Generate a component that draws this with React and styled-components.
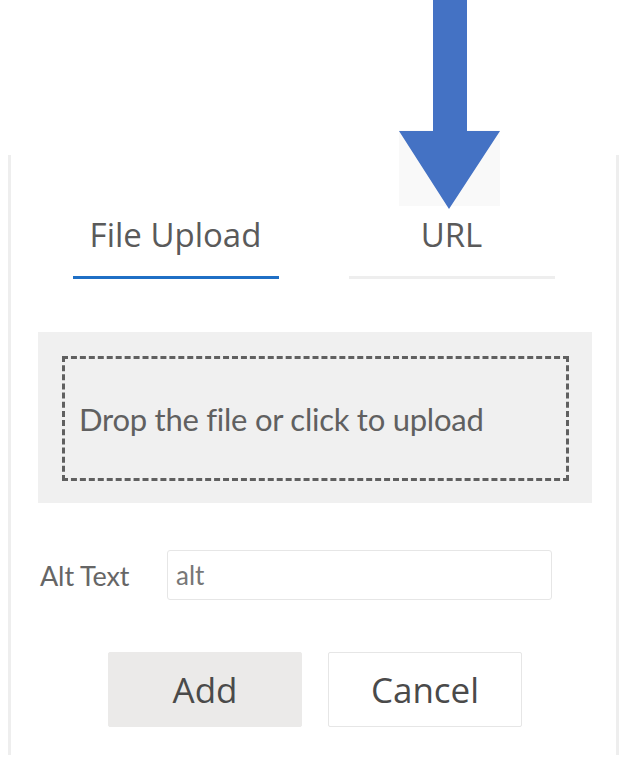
import React, { useState } from "react";
import styled, { createGlobalStyle } from "styled-components";

const Global = createGlobalStyle`
  html, body { margin: 0; padding: 0; background: #ffffff; }
  body { font-family: "Open Sans", "Noto Sans", sans-serif; }
  * { box-sizing: border-box; }
`;

const Page = styled.div`
  position: relative;
  width: 637px;
  height: 768px;
  padding-top: 155px;
  padding-left: 8px;
`;

const Panel = styled.div`
  width: 611px;
  height: 600px;
  border-left: 3px solid #eeeeee;
  border-right: 3px solid #eeeeee;
  padding: 60px 24px 28px 27px;
  display: flex;
  flex-direction: column;
`;

const Tabs = styled.div`
  display: flex;
  justify-content: center;
  gap: 70px;
  margin-left: -3px;
`;

const Tab = styled.button`
  width: 206px;
  height: 64px;
  padding: 0 0 21px;
  background: none;
  border: none;
  border-bottom: 3px solid ${(p) => (p.$active ? "#1f6fc5" : "#eeeeee")};
  font-family: "Open Sans", "Noto Sans", sans-serif;
  font-size: 33px;
  line-height: 40px;
  color: #5a5a5a;
  cursor: pointer;
`;

const DropZone = styled.div`
  margin-top: 53px;
  height: 171px;
  background: #f0f0f0;
  padding: 24px 23px 22px 24px;
  display: flex;
`;

const Dashed = styled.div`
  flex: 1;
  border: 3px dashed #606060;
  display: flex;
  align-items: center;
  padding-left: 14px;
  font-family: "Lato", "Open Sans", sans-serif;
  font-size: 31px;
  font-weight: 400;
  color: #606060;
  letter-spacing: -0.25px;
`;

const Row = styled.div`
  margin-top: 47px;
  display: flex;
  align-items: center;
`;

const Label = styled.label`
  width: 129px;
  padding-left: 2px;
  font-family: "Lato", "Open Sans", sans-serif;
  font-size: 27px;
  color: #666666;
  letter-spacing: -0.1px;
`;

const Input = styled.input`
  width: 385px;
  height: 50px;
  border: 1px solid #e6e6e6;
  border-radius: 3px;
  padding: 0 8px;
  font-family: "Lato", "Open Sans", sans-serif;
  font-size: 26px;
  color: #777777;
  outline: none;
`;

const Buttons = styled.div`
  margin-top: 52px;
  display: flex;
  justify-content: center;
  gap: 26px;
`;

const Button = styled.button`
  width: 194px;
  height: 75px;
  border: 1px solid ${(p) => (p.$primary ? "#ebeae9" : "#e6e6e6")};
  border-radius: 2px;
  background: ${(p) => (p.$primary ? "#ebeae9" : "#ffffff")};
  font-family: "Open Sans", "Noto Sans", sans-serif;
  font-size: 35px;
  color: #4a4a4a;
  cursor: pointer;
`;

const Arrow = styled.svg`
  position: absolute;
  left: 399px;
  top: 0;
  pointer-events: none;
`;

export default function App() {
  const [tab, setTab] = useState("file");
  return (
    <Page>
      <Global />
      <Panel>
        <Tabs>
          <Tab $active={tab === "file"} onClick={() => setTab("file")}>
            File Upload
          </Tab>
          <Tab $active={tab === "url"} onClick={() => setTab("url")}>
            URL
          </Tab>
        </Tabs>
        <DropZone>
          <Dashed>Drop the file or click to upload</Dashed>
        </DropZone>
        <Row>
          <Label htmlFor="alt">Alt Text</Label>
          <Input id="alt" defaultValue="alt" />
        </Row>
        <Buttons>
          <Button $primary>Add</Button>
          <Button>Cancel</Button>
        </Buttons>
      </Panel>
      <Arrow width="102" height="212" viewBox="0 0 102 212">
        <rect x="0" y="130" width="101" height="76" fill="#f9f9f9" />
        <polygon points="34,0 68,0 68,131 101,131 50,209 0,131 34,131" fill="#4472c4" />
      </Arrow>
    </Page>
  );
}
